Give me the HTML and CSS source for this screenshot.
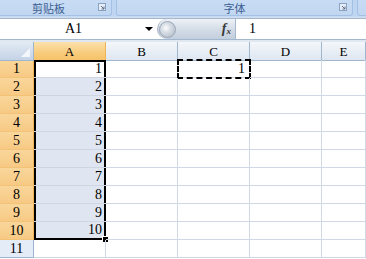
FILE: index.html
```html
<!DOCTYPE html>
<html lang="zh">
<head>
    <meta charset="UTF-8">
    <title>Excel</title>
    <link rel="stylesheet" href="styles.css">
</head>
<body>
    <div class="ribbon">
        <div class="group g1">
            <span class="label">剪贴板</span>
            <svg class="launcher" width="8" height="8" viewBox="0 0 8 8"><rect x="0.5" y="0.5" width="7" height="7" fill="#e8eef7" stroke="#8aa2c2"/><path d="M3 3 L6 6 M6 3.5 V6 H3.5" stroke="#5d6f88" fill="none"/></svg>
        </div>
        <div class="group g2">
            <span class="label">字体</span>
            <svg class="launcher" width="8" height="8" viewBox="0 0 8 8"><rect x="0.5" y="0.5" width="7" height="7" fill="#e8eef7" stroke="#8aa2c2"/><path d="M3 3 L6 6 M6 3.5 V6 H3.5" stroke="#5d6f88" fill="none"/></svg>
        </div>
        <div class="group g3"></div>
    </div>
    <div class="band"></div>
    <div class="fbar">
        <div class="namebox">
            <span class="name">A1</span>
            <span class="arrow"></span>
        </div>
        <div class="capsule">
            <span class="knob"></span>
            <span class="fx">f<sub>x</sub></span>
        </div>
        <div class="input">1</div>
    </div>
    <div class="gap"></div>
    <div class="sheet">
        <div class="corner"><span class="tri"></span></div>
        <div class="colhead on">A</div>
        <div class="colhead">B</div>
        <div class="colhead">C</div>
        <div class="colhead">D</div>
        <div class="colhead">E</div>

        <div class="rowhead on">1</div>
        <div class="cell sel top active">1</div>
        <div class="cell"></div>
        <div class="cell copy">1</div>
        <div class="cell"></div>
        <div class="cell"></div>

        <div class="rowhead on">2</div>
        <div class="cell sel">2</div>
        <div class="cell"></div><div class="cell"></div><div class="cell"></div><div class="cell"></div>

        <div class="rowhead on">3</div>
        <div class="cell sel">3</div>
        <div class="cell"></div><div class="cell"></div><div class="cell"></div><div class="cell"></div>

        <div class="rowhead on">4</div>
        <div class="cell sel">4</div>
        <div class="cell"></div><div class="cell"></div><div class="cell"></div><div class="cell"></div>

        <div class="rowhead on">5</div>
        <div class="cell sel">5</div>
        <div class="cell"></div><div class="cell"></div><div class="cell"></div><div class="cell"></div>

        <div class="rowhead on">6</div>
        <div class="cell sel">6</div>
        <div class="cell"></div><div class="cell"></div><div class="cell"></div><div class="cell"></div>

        <div class="rowhead on">7</div>
        <div class="cell sel">7</div>
        <div class="cell"></div><div class="cell"></div><div class="cell"></div><div class="cell"></div>

        <div class="rowhead on">8</div>
        <div class="cell sel">8</div>
        <div class="cell"></div><div class="cell"></div><div class="cell"></div><div class="cell"></div>

        <div class="rowhead on">9</div>
        <div class="cell sel">9</div>
        <div class="cell"></div><div class="cell"></div><div class="cell"></div><div class="cell"></div>

        <div class="rowhead on">10</div>
        <div class="cell sel bottom">10<span class="handle"></span></div>
        <div class="cell"></div><div class="cell"></div><div class="cell"></div><div class="cell"></div>

        <div class="rowhead">11</div>
        <div class="cell"></div>
        <div class="cell"></div><div class="cell"></div><div class="cell"></div><div class="cell"></div>
    </div>
</body>
</html>
```

FILE: styles.css
```css
body {
    margin: 0;
    width: 366px;
    height: 259px;
    overflow: hidden;
    background: #fff;
    font-family: 'Liberation Serif', serif;
    font-size: 14px;
    color: #000;
}
.ribbon {
    display: flex;
    height: 16px;
    background: #bfd6f2;
    gap: 4px;
}
.group {
    position: relative;
    display: flex;
    justify-content: center;
    align-items: flex-start;
    background: linear-gradient(#c8dcf4, #c1d6f0);
    border: 1px solid #a4c0e4;
    border-top: none;
    border-radius: 0 0 3px 3px;
    box-sizing: border-box;
}
.g1 {
    width: 115px;
    margin-left: -3px;
}
.g2 {
    width: 237px;
}
.g3 {
    flex: 1;
    margin-right: -4px;
}
.label {
    font-family: 'Noto Sans CJK SC', sans-serif;
    font-size: 11px;
    line-height: 16px;
    color: #3b5f94;
}
.g1 .label {
    margin-left: -12px;
}
.launcher {
    position: absolute;
    right: 5px;
    top: 3px;
}
.band {
    height: 2px;
    background: linear-gradient(#c2d7f0, #d3e0f0);
}
.fbar {
    display: flex;
    height: 22px;
    box-sizing: border-box;
    border-top: 1px solid #a3b7cf;
    border-bottom: 1px solid #a3b7cf;
    background: #fff;
}
.namebox {
    width: 157px;
    display: flex;
    align-items: center;
}
.name {
    flex: 1;
    text-align: center;
    padding-left: 2px;
    line-height: 20px;
}
.arrow {
    width: 0;
    height: 0;
    border-left: 4px solid transparent;
    border-right: 4px solid transparent;
    border-top: 4px solid #000;
    margin-right: 4px;
}
.capsule {
    width: 78px;
    display: flex;
    align-items: center;
    justify-content: space-between;
    background: linear-gradient(#eef2f7, #d2dbe6 55%, #c3cfdd);
    border-radius: 10px 0 0 10px;
    border-left: 1px solid #a5b3c4;
    box-sizing: border-box;
}
.knob {
    width: 15px;
    height: 15px;
    margin-left: 1px;
    border-radius: 50%;
    background: radial-gradient(circle at 40% 40%, #fdfdfd 0, #d8dee6 35%, #a9b4c2 100%);
    border: 1px solid #9aa7b7;
}
.fx {
    font-style: italic;
    font-weight: bold;
    font-size: 14px;
    color: #3a3a3a;
    margin-right: 4px;
}
.fx sub {
    font-size: 9px;
    vertical-align: -1px;
}
.input {
    flex: 1;
    border-left: 1px solid #a3b7cf;
    padding-left: 13px;
    line-height: 20px;
}
.gap {
    height: 2px;
    background: #dfe7f1;
}
.sheet {
    display: grid;
    grid-template-columns: 34px 72px 72px 72px 72px 44px;
    grid-auto-rows: 18px;
}
.corner, .colhead {
    height: 19px;
    box-sizing: border-box;
    border-right: 1px solid #9eb6ce;
    border-bottom: 1px solid #9eb6ce;
    background: linear-gradient(#f4f7fb, #dee6f0);
    text-align: center;
    line-height: 19px;
    font-size: 13px;
}
.corner {
    position: relative;
    background: linear-gradient(#e2eaf4, #c4d3e6);
}
.tri {
    position: absolute;
    right: 3px;
    bottom: 3px;
    border-left: 9px solid transparent;
    border-bottom: 9px solid #f3f6fa;
}
.colhead.on {
    background: linear-gradient(#fbe1ac, #f8cc7c 60%, #f5c26a);
    border-right-color: #f0b456;
    border-bottom-color: #f0b456;
}
.rowhead {
    box-sizing: border-box;
    border-right: 1px solid #9eb6ce;
    border-bottom: 1px solid #9eb6ce;
    background: #e4ecf7;
    text-align: center;
    line-height: 18px;
}
.rowhead.on {
    background: linear-gradient(#f9d69b, #f7ca84);
    border-bottom-color: #f2c277;
    border-right-color: #f0b456;
}
.cell {
    position: relative;
    box-sizing: border-box;
    border-right: 1px solid #d0d7e5;
    border-bottom: 1px solid #d0d7e5;
    text-align: right;
    padding-right: 4px;
    line-height: 18px;
}
.sel {
    background: #e0e6f1;
    border-bottom-color: #cfd6e3;
    box-shadow: inset 2px 0 #000, inset -2px 0 #000;
    border-right: none;
}
.sel.top {
    box-shadow: inset 2px 0 #000, inset -2px 0 #000, inset 0 2px #000;
}
.sel.active {
    background: #fff;
}
.sel.bottom {
    border-bottom: 2px solid #000;
    line-height: 16px;
}
.handle {
    position: absolute;
    right: -2px;
    bottom: -4px;
    width: 5px;
    height: 5px;
    background: #000;
    border: 1px solid #fff;
    border-right: none;
    border-bottom: none;
}
.copy {
    outline: 2px dashed #000;
    outline-offset: -1px;
}
```
